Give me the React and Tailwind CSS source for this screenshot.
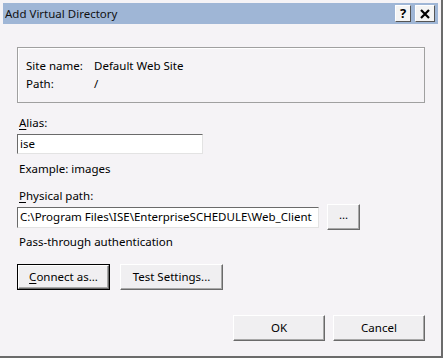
export default function App() {
  const btn =
    "flex items-center justify-center bg-[#f0eff1] border border-t-white border-l-white border-r-[#6a6a6a] border-b-[#6a6a6a] shadow-[inset_-1px_-1px_0_#a8a8a8] text-black";

  return (
    <div
      className="flex h-[358px] w-[443px] flex-col border-b-2 border-r-2 border-[#6b6b6b] bg-[#f5f3f6] text-[11.5px] leading-[16px] text-black"
      style={{ fontFamily: '"Noto Sans", "Open Sans", sans-serif' }}
    >
      <div className="mx-[3px] mt-[3px] flex h-[21px] items-center justify-between bg-[#9fb6d6] pl-[2px] pr-[3px]">
        <span className="text-[11.5px] text-[#111]">Add Virtual Directory</span>
        <div className="flex items-center gap-[4px]">
          <div className="flex h-[17px] w-[16px] items-center justify-center border border-t-white border-l-white border-r-[#555] border-b-[#555] bg-[#f4f4f4] text-[13px] font-bold leading-none">
            ?
          </div>
          <div className="flex h-[17px] w-[20px] items-center justify-center border border-t-white border-l-white border-r-[#555] border-b-[#555] bg-[#f4f4f4]">
            <svg width="10" height="10" viewBox="0 0 10 10">
              <path d="M1 1 L9 9 M9 1 L1 9" stroke="#000" strokeWidth="2.2" />
            </svg>
          </div>
        </div>
      </div>

      <div className="flex flex-col pl-[17px] pr-[16px]">
        <div className="mt-[23px] border border-[#a0a0a0] px-[8px] py-[9px] shadow-[inset_1px_1px_0_#fff]">
          <div className="flex h-[18px] items-center">
            <span className="w-[68px]">Site name:</span>
            <span>Default Web Site</span>
          </div>
          <div className="flex h-[18px] items-center">
            <span className="w-[68px]">Path:</span>
            <span>/</span>
          </div>
        </div>

        <div className="mt-[12px] pl-[2px]">
          <span className="underline underline-offset-2">A</span>lias:
        </div>
        <div className="mt-[3px] flex h-[20px] w-[186px] items-center border border-t-[#6a6a6a] border-l-[#6a6a6a] border-r-[#e3e3e3] border-b-[#e3e3e3] bg-white pl-[2px]">
          ise
        </div>
        <div className="mt-[7px] pl-[2px]">Example: images</div>

        <div className="mt-[11px] pl-[2px]">
          <span className="underline underline-offset-2">P</span>hysical path:
        </div>
        <div className="flex h-[26px] items-center">
          <div className="flex h-[21px] w-[302px] items-center whitespace-nowrap border border-t-[#6a6a6a] border-l-[#6a6a6a] border-r-[#e3e3e3] border-b-[#e3e3e3] bg-white pl-[2px]">
            C:\Program Files\ISE\EnterpriseSCHEDULE\Web_Client
          </div>
          <div className={`${btn} ml-[8px] h-[26px] w-[33px] pb-[4px]`}>...</div>
        </div>
        <div className="mt-[4px] pl-[2px]">Pass-through authentication</div>

        <div className="mt-[14px] flex gap-[10px]">
          <div className="h-[26px] w-[93px] border border-black">
            <div className={`${btn} h-full w-full`}>
              <span>
                <span className="underline underline-offset-2">C</span>onnect as...
              </span>
            </div>
          </div>
          <div className={`${btn} h-[26px] w-[103px]`}>Test Settings...</div>
        </div>

        <div className="mt-[25px] flex justify-end gap-[8px]">
          <div className={`${btn} h-[26px] w-[92px]`}>OK</div>
          <div className={`${btn} h-[26px] w-[92px]`}>Cancel</div>
        </div>
      </div>
    </div>
  );
}
